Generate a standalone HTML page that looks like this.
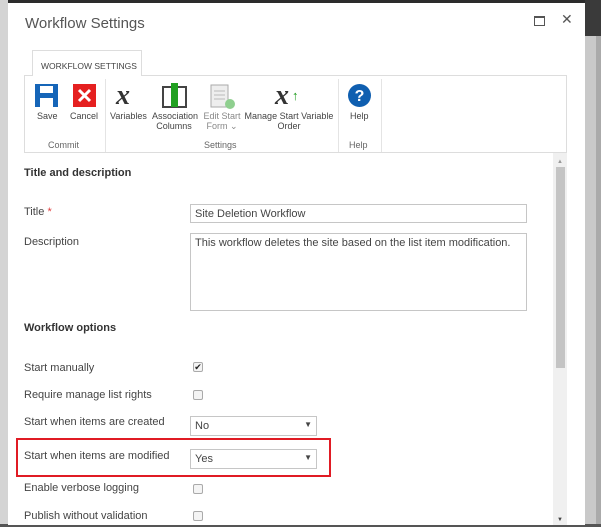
<!DOCTYPE html>
<html><head><style>
*{margin:0;padding:0;box-sizing:border-box}
body{width:601px;height:527px;overflow:hidden;background:#c9c9c9;font-family:"Liberation Sans",sans-serif;position:relative;color:#444}
.a{position:absolute}
.dlg{left:8px;top:3px;width:577px;height:522px;background:#fff}
.lbl{font-size:11px;color:#444}
.inp{border:1px solid #c6c6c6;background:#fff;font-size:11px;color:#444;padding:3px 4px}
.cb{width:10px;height:10px;border:1px solid #aaa;border-radius:2px;background:#f4f4f4}
.rt{font-size:9px;color:#444;text-align:center;line-height:10px}
.gl{font-size:9px;color:#666}
</style></head><body>
<div class="a" style="left:0;top:0;width:601px;height:3px;background:#2c2c2c"></div>
<div class="a" style="left:585px;top:0;width:16px;height:36px;background:#3a3a3a"></div>
<div class="a" style="left:596px;top:36px;width:5px;height:491px;background:#aaa"></div>
<div class="a" style="left:0;top:0;width:8px;height:527px;background:#d4d4d4"></div>
<div class="a" style="left:0;top:524px;width:601px;height:3px;background:#555"></div>
<div class="a dlg"></div>
<div class="a" style="left:25px;top:15px;font-size:15px;color:#555">Workflow Settings</div>
<div class="a" style="left:534px;top:16px;width:11px;height:10px;border:1px solid #555;border-top-width:2px"></div>
<div class="a" style="left:561px;top:11px;font-size:14px;color:#555">✕</div>
<!-- ribbon -->
<div class="a" style="left:32px;top:50px;width:110px;height:26px;border:1px solid #ddd;border-bottom:none;background:#fff;font-size:8.5px;color:#444;padding:10px 0 0 8px;white-space:nowrap;z-index:2">WORKFLOW SETTINGS</div>
<div class="a" style="left:24px;top:75px;width:543px;height:78px;border:1px solid #ddd"></div>
<div class="a" style="left:105px;top:79px;width:1px;height:73px;background:#e4e4e4"></div>
<div class="a" style="left:338px;top:79px;width:1px;height:73px;background:#e4e4e4"></div>
<div class="a" style="left:381px;top:79px;width:1px;height:73px;background:#e4e4e4"></div>
<svg class="a" style="left:35px;top:84px" width="23" height="23" viewBox="0 0 23 23"><rect x="0" y="0" width="23" height="23" fill="#1565b8"/><rect x="5" y="2" width="13" height="7" fill="#fff"/><rect x="5" y="14" width="13" height="9" fill="#fff"/></svg>
<svg class="a" style="left:73px;top:84px" width="23" height="23"><rect width="23" height="23" fill="#e52020"/><path d="M6 6L17 17M17 6L6 17" stroke="#fff" stroke-width="3"/></svg>
<div class="a rt" style="left:37px;top:111px">Save</div>
<div class="a rt" style="left:70px;top:111px">Cancel</div>
<div class="a gl" style="left:48px;top:140px">Commit</div>
<div class="a" style="left:116px;top:80px;font:italic bold 28px 'Liberation Serif',serif;color:#333">x</div>
<div class="a rt" style="left:110px;top:111px">Variables</div>
<svg class="a" style="left:162px;top:82px" width="25" height="26"><rect x="1" y="5" width="23" height="20" fill="#fff" stroke="#444" stroke-width="2"/><rect x="9" y="1" width="7" height="24" fill="#20a020"/></svg>
<div class="a rt" style="left:152px;top:111px;width:44px">Association Columns</div>
<svg class="a" style="left:210px;top:84px" width="26" height="26"><rect x="1" y="1" width="17" height="22" fill="#eee" stroke="#aaa"/><path d="M4 7h11M4 11h11M4 15h11" stroke="#bbb"/><circle cx="20" cy="20" r="5" fill="#8fcf8f"/></svg>
<div class="a rt" style="left:202px;top:111px;width:40px;color:#888">Edit Start Form ⌄</div>
<div class="a" style="left:275px;top:80px;font:italic bold 28px 'Liberation Serif',serif;color:#333">x</div>
<div class="a" style="left:292px;top:88px;font-size:13px;color:#1a9a1a;font-weight:bold">↑</div>
<div class="a rt" style="left:244px;top:111px;width:90px">Manage Start Variable Order</div>
<div class="a gl" style="left:204px;top:140px">Settings</div>
<svg class="a" style="left:348px;top:84px" width="23" height="23"><circle cx="11.5" cy="11.5" r="11.5" fill="#0f5fb0"/><text x="11.5" y="17" font-size="16" font-weight="bold" fill="#fff" text-anchor="middle" font-family="Liberation Sans">?</text></svg>
<div class="a rt" style="left:350px;top:111px">Help</div>
<div class="a gl" style="left:349px;top:140px">Help</div>
<div class="a" style="left:553px;top:153px;width:14px;height:372px;background:#f0f0f0"></div>
<div class="a" style="left:556px;top:167px;width:9px;height:201px;background:#c4c4c4"></div>
<div class="a" style="left:557px;top:159px;font-size:6px;color:#999">▲</div>
<div class="a" style="left:557px;top:517px;font-size:6px;color:#444">▼</div>
<div class="a" style="left:24px;top:167px;font-size:11px;font-weight:bold;color:#333">Title and description</div>
<div class="a lbl" style="left:24px;top:206px">Title <span style="color:#e04040">*</span></div>
<div class="a inp" style="left:190px;top:204px;width:337px;height:19px">Site Deletion Workflow</div>
<div class="a lbl" style="left:24px;top:236px">Description</div>
<div class="a inp" style="left:190px;top:233px;width:337px;height:78px">This workflow deletes the site based on the list item modification.</div>
<div class="a" style="left:24px;top:322px;font-size:11px;font-weight:bold;color:#333">Workflow options</div>
<div class="a lbl" style="left:24px;top:362px">Start manually</div>
<div class="a cb" style="left:193px;top:362px;font-size:9px;line-height:8px;text-align:center;color:#222">✔</div>
<div class="a lbl" style="left:24px;top:389px">Require manage list rights</div>
<div class="a cb" style="left:193px;top:390px"></div>
<div class="a lbl" style="left:24px;top:416px">Start when items are created</div>
<div class="a inp" style="left:190px;top:416px;width:127px;height:20px">No<span style="float:right;font-size:8px">▼</span></div>
<div class="a" style="left:16px;top:438px;width:315px;height:39px;border:2px solid #e01b24"></div>
<div class="a lbl" style="left:24px;top:450px">Start when items are modified</div>
<div class="a inp" style="left:190px;top:449px;width:127px;height:20px">Yes<span style="float:right;font-size:8px">▼</span></div>
<div class="a lbl" style="left:24px;top:482px">Enable verbose logging</div>
<div class="a cb" style="left:193px;top:484px"></div>
<div class="a lbl" style="left:24px;top:510px">Publish without validation</div>
<div class="a cb" style="left:193px;top:511px"></div>
</body></html>
